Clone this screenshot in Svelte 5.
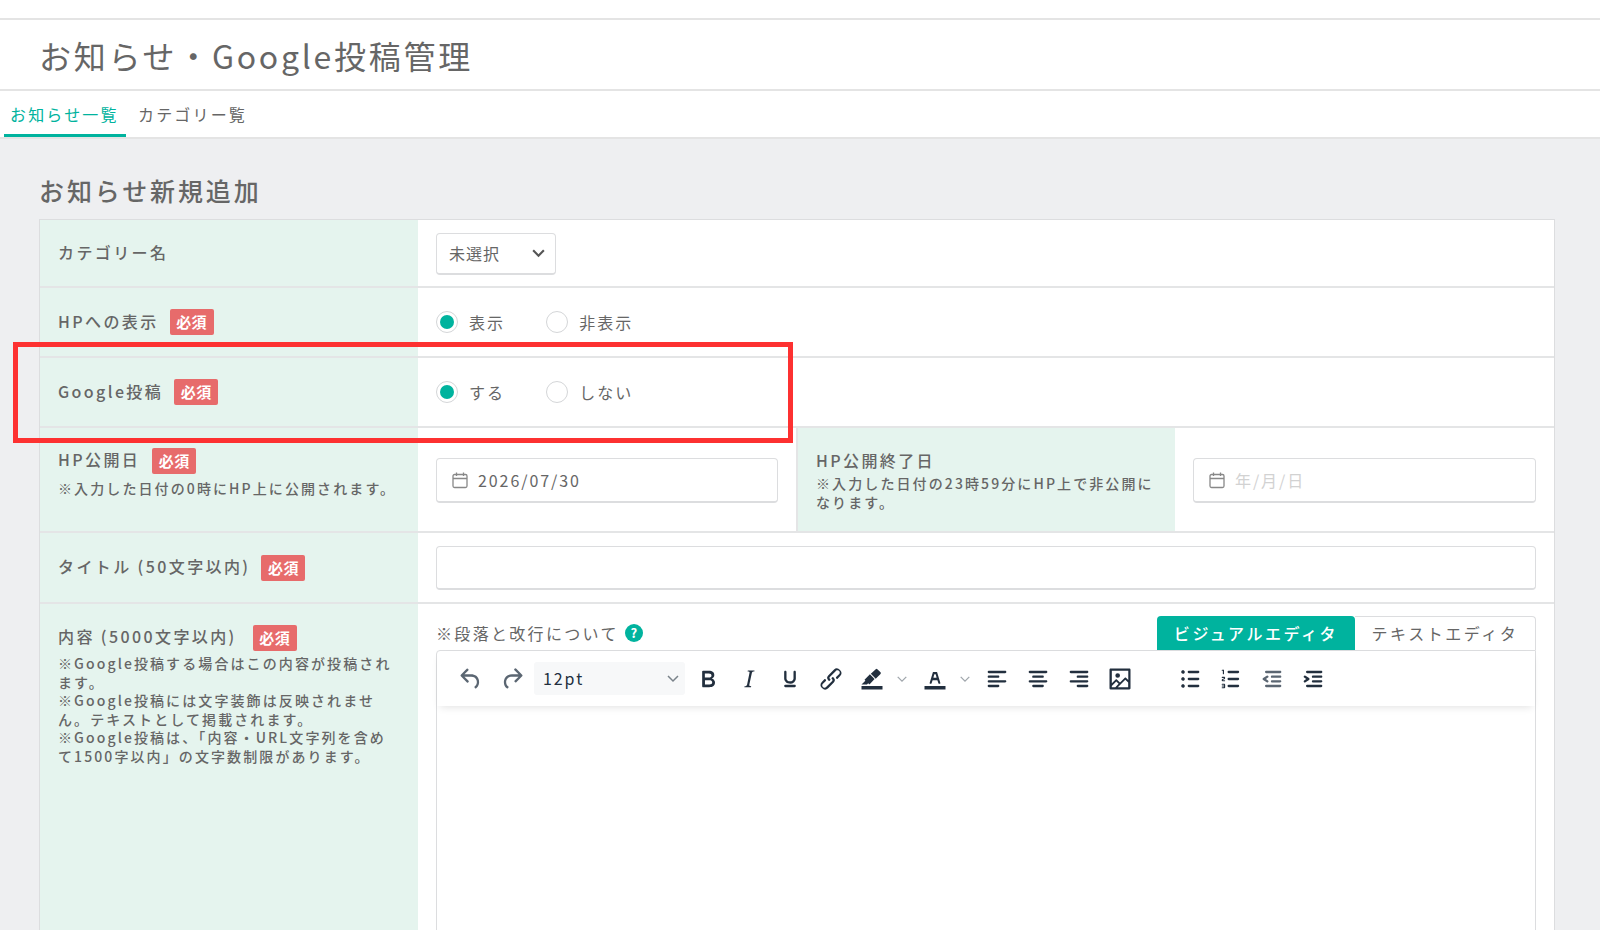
<script>
	const noteLines = [
		'※Google投稿する場合はこの内容が投稿されます。',
		'※Google投稿には文字装飾は反映されません。テキストとして掲載されます。',
		'※Google投稿は、「内容・URL文字列を含めて1500字以内」の文字数制限があります。'
	];

	const icons = {
		undo: 'M6.4 8H12c3.7 0 6.2 2 6.8 5.1.6 2.7-.4 5.6-2.3 6.8a1 1 0 0 1-1-1.8c1.1-.6 1.8-2.7 1.4-4.6-.5-2.1-2.1-3.5-4.9-3.5H6.4l3.3 3.3a1 1 0 1 1-1.4 1.4l-5-5a1 1 0 0 1 0-1.4l5-5a1 1 0 0 1 1.4 1.4L6.4 8z',
		redo: 'M17.6 10H12c-2.8 0-4.4 1.4-4.9 3.5-.4 2 .3 4 1.4 4.6a1 1 0 1 1-1 1.8c-2-1.2-2.9-4.1-2.3-6.8.6-3 3-5.1 6.8-5.1h5.6l-3.3-3.3a1 1 0 1 1 1.4-1.4l5 5a1 1 0 0 1 0 1.4l-5 5a1 1 0 0 1-1.4-1.4l3.3-3.3z',
		bold: 'M7.8 19c-.3 0-.5 0-.6-.2l-.2-.5V5.7c0-.2 0-.4.2-.5l.6-.2h5c1.5 0 2.7.3 3.5 1 .7.6 1.1 1.4 1.1 2.5a3 3 0 0 1-.6 1.9c-.4.6-1 1-1.6 1.2.4.1.9.3 1.3.6s.8.7 1 1.2c.4.4.5 1 .5 1.6 0 1.3-.4 2.3-1.3 3-.8.7-2.1 1-3.8 1H7.8zm5-8.3c.6 0 1.2-.1 1.6-.5.4-.3.6-.7.6-1.3 0-1.1-.8-1.7-2.3-1.7H9.3v3.5h3.4zm.5 6c.7 0 1.3-.1 1.7-.4.4-.4.6-.9.6-1.5s-.2-1-.7-1.4c-.4-.3-1-.4-2-.4H9.4v3.8h4z',
		italic: 'M16.7 4.7l-.1.9h-.3c-.6 0-1 0-1.4.3-.3.3-.4.6-.5 1.1l-2.1 9.8v.6c0 .5.4.8 1.4.8h.2l-.2.8H8l.2-.8h.2c1.1 0 1.8-.5 2-1.5l2-9.8.1-.5c0-.6-.4-.8-1.4-.8h-.3l.2-.9h5.8z',
		underline: 'M16 5c.6 0 1 .4 1 1v5.5a4 4 0 0 1-.4 1.8l-1 1.4a5.3 5.3 0 0 1-5.5 1 5 5 0 0 1-1.6-1c-.5-.4-.8-.9-1.1-1.4a4 4 0 0 1-.4-1.8V6c0-.6.4-1 1-1s1 .4 1 1v5.5c0 .3 0 .6.2 1l.6.7a3.3 3.3 0 0 0 2.2.8 3.4 3.4 0 0 0 2.2-.8c.3-.2.4-.5.6-.8l.2-.9V6c0-.6.4-1 1-1zM8 17h8c.6 0 1 .4 1 1s-.4 1-1 1H8a1 1 0 0 1 0-2z',
		link: 'M6.2 12.3a1 1 0 0 1 1.4 1.4l-2 2a2 2 0 1 0 2.6 2.8l4.8-4.8a1 1 0 0 0 0-1.4 1 1 0 1 1 1.4-1.3 2.9 2.9 0 0 1 0 4L9.6 20a3.9 3.9 0 0 1-5.5-5.5l2-2zm11.6-.6a1 1 0 0 1-1.4-1.4l2-2a2 2 0 1 0-2.6-2.8L11 10.3a1 1 0 0 0 0 1.4A1 1 0 1 1 9.6 13a2.9 2.9 0 0 1 0-4L14.4 4a3.9 3.9 0 0 1 5.5 5.5l-2 2z',
		highlight: 'M3 18h18v3H3zM7.7 16.7H3l3.3-3.3-.7-.8L10.2 8l4 4.1-4 4.2c-.2.2-.6.2-.8 0l-.7-.7zm7.5-13.1a1 1 0 0 1 1.4 0l2.7 2.7a1 1 0 0 1 0 1.4l-4.1 4.1-4.2-4.2 4.2-4z',
		textcolor: 'M3 18h18v3H3zM8.7 16h-.8a.5.5 0 0 1-.5-.6l2.7-9c.1-.3.3-.4.5-.4h2.8c.2 0 .4.1.5.4l2.7 9a.5.5 0 0 1-.5.6h-.8a.5.5 0 0 1-.4-.4l-.7-2.2c0-.3-.3-.4-.5-.4h-3.4c-.2 0-.4.1-.5.4l-.7 2.2c0 .3-.2.4-.4.4zm2.6-7.6l-.6 2a.5.5 0 0 0 .5.6h1.6a.5.5 0 0 0 .5-.6l-.6-2c0-.3-.3-.4-.5-.4h-.4c-.2 0-.4.1-.5.4z',
		left: 'M5 5h14c.6 0 1 .4 1 1s-.4 1-1 1H5a1 1 0 1 1 0-2zm0 4h8c.6 0 1 .4 1 1s-.4 1-1 1H5a1 1 0 1 1 0-2zm0 8h8c.6 0 1 .4 1 1s-.4 1-1 1H5a1 1 0 0 1 0-2zm0-4h14c.6 0 1 .4 1 1s-.4 1-1 1H5a1 1 0 0 1 0-2z',
		center: 'M5 5h14c.6 0 1 .4 1 1s-.4 1-1 1H5a1 1 0 1 1 0-2zm3 4h8c.6 0 1 .4 1 1s-.4 1-1 1H8a1 1 0 1 1 0-2zm0 8h8c.6 0 1 .4 1 1s-.4 1-1 1H8a1 1 0 0 1 0-2zm-3-4h14c.6 0 1 .4 1 1s-.4 1-1 1H5a1 1 0 0 1 0-2z',
		right: 'M5 5h14c.6 0 1 .4 1 1s-.4 1-1 1H5a1 1 0 1 1 0-2zm6 4h8c.6 0 1 .4 1 1s-.4 1-1 1h-8a1 1 0 0 1 0-2zm0 8h8c.6 0 1 .4 1 1s-.4 1-1 1h-8a1 1 0 0 1 0-2zm-6-4h14c.6 0 1 .4 1 1s-.4 1-1 1H5a1 1 0 0 1 0-2z',
		image: 'M5 15.7l3.3-3.2c.3-.3.7-.3 1 0L12 15l4.1-4c.3-.4.8-.4 1 0l2 1.9V5H5v10.7zM5 18V19h3l2.8-2.9-2-2L5 17.9zm14-3l-2.5-2.4-6.4 6.5H19v-4zM4 3h16c.6 0 1 .4 1 1v16c0 .6-.4 1-1 1H4a1 1 0 0 1-1-1V4c0-.6.4-1 1-1zm6 8a2 2 0 1 0 0-4 2 2 0 0 0 0 4z',
		bullist: 'M11 5h8c.6 0 1 .4 1 1s-.4 1-1 1h-8a1 1 0 0 1 0-2zm0 6h8c.6 0 1 .4 1 1s-.4 1-1 1h-8a1 1 0 0 1 0-2zm0 6h8c.6 0 1 .4 1 1s-.4 1-1 1h-8a1 1 0 0 1 0-2zM4.5 6c0-.4.1-.8.4-1 .3-.4.7-.5 1.1-.5.4 0 .8.1 1 .4.4.3.5.7.5 1.1 0 .4-.1.8-.4 1-.3.4-.7.5-1.1.5-.4 0-.8-.1-1-.4-.4-.3-.5-.7-.5-1.1zm0 6c0-.4.1-.8.4-1 .3-.4.7-.5 1.1-.5.4 0 .8.1 1 .4.4.3.5.7.5 1.1 0 .4-.1.8-.4 1-.3.4-.7.5-1.1.5-.4 0-.8-.1-1-.4-.4-.3-.5-.7-.5-1.1zm0 6c0-.4.1-.8.4-1 .3-.4.7-.5 1.1-.5.4 0 .8.1 1 .4.4.3.5.7.5 1.1 0 .4-.1.8-.4 1-.3.4-.7.5-1.1.5-.4 0-.8-.1-1-.4-.4-.3-.5-.7-.5-1.1z',
		numlist: 'M10 17h8c.6 0 1 .4 1 1s-.4 1-1 1h-8a1 1 0 0 1 0-2zm0-6h8c.6 0 1 .4 1 1s-.4 1-1 1h-8a1 1 0 0 1 0-2zm0-6h8c.6 0 1 .4 1 1s-.4 1-1 1h-8a1 1 0 1 1 0-2zM6 4v3.5c0 .3-.2.5-.5.5a.5.5 0 0 1-.5-.5V5h-.5a.5.5 0 0 1 0-1H6zm-1 8.8l.2.2h1.3c.3 0 .5.2.5.5s-.2.5-.5.5H4.9a1 1 0 0 1-.9-1V13c0-.4.3-.8.6-1l1.2-.4.2-.3a.2.2 0 0 0-.2-.2H4.5a.5.5 0 0 1-.5-.5c0-.3.2-.5.5-.5h1.6c.5 0 .9.4.9 1v.1c0 .4-.3.8-.6 1l-1.2.4-.2.3zM7 17v2c0 .6-.4 1-1 1H4.5a.5.5 0 0 1 0-1h1.2c.2 0 .3-.1.3-.3 0-.2-.1-.3-.3-.3H4.4a.4.4 0 1 1 0-.8h1.3c.2 0 .3-.1.3-.3 0-.2-.1-.3-.3-.3H4.5a.5.5 0 1 1 0-1H6c.6 0 1 .4 1 1z',
		outdent: 'M7 5h12c.6 0 1 .4 1 1s-.4 1-1 1H7a1 1 0 1 1 0-2zm5 4h7c.6 0 1 .4 1 1s-.4 1-1 1h-7a1 1 0 0 1 0-2zm0 4h7c.6 0 1 .4 1 1s-.4 1-1 1h-7a1 1 0 0 1 0-2zm-5 4h12a1 1 0 0 1 0 2H7a1 1 0 0 1 0-2zm1.6-3.8a1 1 0 0 1-1.2 1.6l-3-2a1 1 0 0 1 0-1.6l3-2a1 1 0 0 1 1.2 1.6L6.8 12l1.8 1.2z',
		indent: 'M7 5h12c.6 0 1 .4 1 1s-.4 1-1 1H7a1 1 0 1 1 0-2zm5 4h7c.6 0 1 .4 1 1s-.4 1-1 1h-7a1 1 0 0 1 0-2zm0 4h7c.6 0 1 .4 1 1s-.4 1-1 1h-7a1 1 0 0 1 0-2zm-5 4h12a1 1 0 0 1 0 2H7a1 1 0 0 1 0-2zm-2.6-3.8L6.2 12l-1.8-1.2a1 1 0 0 1 1.2-1.6l3 2a1 1 0 0 1 0 1.6l-3 2a1 1 0 1 1-1.2-1.6z'
	};

	const chevron = 'M2 2l5 5 5-5';
</script>

{#snippet icon(name, dim = false)}
	<span class="tool" class:dim>
		<svg viewBox="0 0 24 24" width="28" height="28"><path d={icons[name]} fill-rule="evenodd" /></svg>
	</span>
{/snippet}

{#snippet caret()}
	<span class="caret">
		<svg viewBox="0 0 14 9" width="12" height="8"><path d={chevron} /></svg>
	</span>
{/snippet}

{#snippet calendar()}
	<svg class="cal" viewBox="0 0 18 18" width="18" height="18">
		<rect x="2" y="3.5" width="14" height="13" rx="1.5" />
		<path d="M2 7.5h14M5.5 1.5v3.5M12.5 1.5v3.5" />
	</svg>
{/snippet}

{#snippet radio(label, on)}
	<span class="radio-item">
		<span class="radio" class:on></span>
		<span>{label}</span>
	</span>
{/snippet}

<div class="page">
	<header class="head">
		<h1>お知らせ・Google投稿管理</h1>
	</header>
	<nav class="tabs">
		<span class="tab active">お知らせ一覧</span>
		<span class="tab">カテゴリー覧</span>
	</nav>

	<main class="body">
		<h2>お知らせ新規追加</h2>
		<div class="table">
			<div class="row r1">
				<div class="label"><span>カテゴリー名</span></div>
				<div class="value">
					<div class="select">
						<span>未選択</span>
						<svg viewBox="0 0 14 9" width="15" height="10"><path d={chevron} /></svg>
					</div>
				</div>
			</div>

			<div class="row r2">
				<div class="label"><span>HPへの表示</span><b class="req">必須</b></div>
				<div class="value radios">
					{@render radio('表示', true)}
					{@render radio('非表示', false)}
				</div>
			</div>

			<div class="row r2">
				<div class="label"><span>Google投稿</span><b class="req">必須</b></div>
				<div class="value radios">
					{@render radio('する', true)}
					{@render radio('しない', false)}
				</div>
			</div>

			<div class="row dates">
				<div class="label stack">
					<div class="title-line"><span>HP公開日</span><b class="req">必須</b></div>
					<p class="note">※入力した日付の0時にHP上に公開されます。</p>
				</div>
				<div class="value">
					<div class="input date">{@render calendar()}<span>2026/07/30</span></div>
				</div>
				<div class="label stack second">
					<div class="title-line"><span>HP公開終了日</span></div>
					<p class="note">※入力した日付の23時59分にHP上で非公開になります。</p>
				</div>
				<div class="value">
					<div class="input date">{@render calendar()}<span class="placeholder">年/月/日</span></div>
				</div>
			</div>

			<div class="row r-title">
				<div class="label"><span>タイトル (50文字以内)</span><b class="req">必須</b></div>
				<div class="value"><div class="input wide"></div></div>
			</div>

			<div class="row r-content">
				<div class="label stack">
					<div class="title-line"><span>内容 (5000文字以内)</span><b class="req">必須</b></div>
					{#each noteLines as line}
						<p class="note">{line}</p>
					{/each}
				</div>
				<div class="value editor-cell">
					<div class="editor-head">
						<span class="hint">※段落と改行について<i class="help">?</i></span>
						<div class="modes">
							<span class="mode on">ビジュアルエディタ</span>
							<span class="mode">テキストエディタ</span>
						</div>
					</div>
					<div class="editor">
						<div class="toolbar">
							{@render icon('undo', true)}
							{@render icon('redo', true)}
							<div class="size">
								<span>12pt</span>
								<svg viewBox="0 0 14 9" width="14" height="9"><path d={chevron} /></svg>
							</div>
							{@render icon('bold')}
							{@render icon('italic')}
							{@render icon('underline')}
							{@render icon('link')}
							{@render icon('highlight')}
							{@render caret()}
							{@render icon('textcolor')}
							{@render caret()}
							{@render icon('left')}
							{@render icon('center')}
							{@render icon('right')}
							{@render icon('image')}
							<span class="sep"></span>
							{@render icon('bullist')}
							{@render icon('numlist')}
							{@render icon('outdent', true)}
							{@render icon('indent')}
						</div>
						<div class="edit-area"></div>
					</div>
				</div>
			</div>
		</div>
	</main>

	<div class="callout"></div>
</div>

<style>
	:global(body) {
		margin: 0;
		background: #fff;
		overflow: hidden;
	}

	.page {
		position: relative;
		height: 930px;
		overflow: hidden;
		font-family: 'Noto Sans CJK JP', 'Noto Sans', sans-serif;
		color: #666;
		letter-spacing: 0.12em;
	}

	.head {
		margin-top: 18px;
		height: 67px;
		border-top: 2px solid #e4e4e4;
		border-bottom: 2px solid #e4e4e4;
		padding: 2px 0 0 39px;
		display: flex;
		align-items: center;
		background: #fff;
	}

	h1 {
		margin: 0;
		font-size: 32px;
		font-weight: 400;
		line-height: 1.2;
		letter-spacing: 0.085em;
		white-space: nowrap;
	}

	.tabs {
		height: 46px;
		padding-left: 4px;
		display: flex;
		border-bottom: 2px solid #e4e4e4;
	}

	.tab {
		padding: 0 6px;
		width: 110px;
		margin-right: 6px;
		line-height: 47px;
		font-size: 16px;
		letter-spacing: 0.135em;
		white-space: nowrap;
	}

	.tab.active {
		color: #00b39e;
		border-bottom: 3px solid #00b39e;
		width: 122px;
		height: 46px;
		box-sizing: border-box;
	}

	.body {
		background: #eeeff1;
		padding: 33px 45px 0 39px;
		height: 800px;
	}

	h2 {
		margin: 0 0 10px;
		font-size: 25px;
		font-weight: 500;
		line-height: 37px;
		letter-spacing: 0.115em;
	}

	.table {
		border: 1px solid #dcdddf;
		background: #fff;
	}

	.row {
		display: grid;
		grid-template-columns: 378px 1fr;
		border-bottom: 2px solid #e4e5e6;
	}

	.r1 { height: 66px; }
	.r2 { height: 68px; }
	.r-title { height: 69px; }
	.dates {
		height: 103px;
		grid-template-columns: 378px 378px 379px 1fr;
	}
	.r-content { height: 500px; border-bottom: 0; }

	.label {
		background: #e5f4ee;
		padding: 0 18px;
		display: flex;
		align-items: center;
		font-size: 16px;
		font-weight: 500;
		letter-spacing: 0.15em;
		white-space: nowrap;
	}

	.label > span,
	.title-line > span {
		margin-bottom: 3px;
	}

	.label.stack {
		display: block;
		padding-top: 19px;
		white-space: normal;
	}

	.label.second {
		border-left: 2px solid #e4e5e6;
		padding-top: 22px;
	}

	.title-line {
		display: flex;
		align-items: center;
		height: 27px;
		white-space: nowrap;
	}

	.req {
		margin-left: 11px;
		width: 44px;
		height: 26px;
		border-radius: 2px;
		background: #e76b6b;
		color: #fff;
		font-size: 15px;
		font-weight: 700;
		line-height: 26px;
		text-align: center;
		letter-spacing: 0.03em;
		flex: none;
	}

	.stack .req { margin-left: 12px; }
	.r-content .label.stack { padding-top: 20px; }
	.r-content .req { margin-left: 16px; }

	.note {
		margin: 0;
		font-size: 14px;
		line-height: 18.6px;
		font-weight: 500;
		letter-spacing: 0.15em;
	}

	.stack .title-line + .note { margin-top: 5px; }
	.second .title-line { height: 22px; }
	.second .title-line + .note { margin-top: 2px; }
	.r-content .title-line + .note { margin-top: 3px; }

	.value {
		padding: 0 18px;
		display: flex;
		align-items: center;
		font-size: 16px;
		min-width: 0;
	}

	.select {
		width: 120px;
		height: 42px;
		margin-top: 1px;
		box-sizing: border-box;
		border: 1px solid #dcdddf;
		border-bottom-width: 2px;
		border-radius: 4px;
		padding: 0 9px 0 12px;
		display: flex;
		align-items: center;
		justify-content: space-between;
	}

	.select span { letter-spacing: 0.06em; }

	.select svg path,
	.size svg path,
	.caret svg path {
		fill: none;
		stroke: #555;
		stroke-width: 2;
	}

	.radios { gap: 41px; }

	.radio-item {
		display: flex;
		align-items: center;
		gap: 11px;
		letter-spacing: 0.13em;
	}

	.radio {
		width: 22px;
		height: 22px;
		box-sizing: border-box;
		border: 1px solid #d4d6d8;
		border-radius: 50%;
		background: #fff;
		display: flex;
		align-items: center;
		justify-content: center;
	}

	.radio.on::after {
		content: '';
		width: 14px;
		height: 14px;
		border-radius: 50%;
		background: #00b39e;
	}

	.input {
		box-sizing: border-box;
		height: 45px;
		width: 100%;
		border: 1px solid #dcdddf;
		border-bottom-width: 2px;
		border-radius: 4px;
		background: #fff;
	}

	.input.wide { height: 44px; }

	.date {
		display: flex;
		align-items: center;
		padding-left: 14px;
		gap: 9px;
		margin-top: 1px;
	}

	.cal rect,
	.cal path {
		fill: none;
		stroke: #888;
		stroke-width: 1.3;
	}

	.placeholder { color: #d2d2d2; }

	.editor-cell {
		display: block;
		padding-top: 12px;
	}

	.editor-head {
		display: flex;
		justify-content: space-between;
		align-items: flex-end;
		height: 34px;
	}

	.hint {
		display: flex;
		align-items: center;
		align-self: center;
		letter-spacing: 0.145em;
	}

	.help {
		margin-left: 6px;
		width: 18px;
		height: 18px;
		border-radius: 50%;
		background: #00b39e;
		color: #fff;
		font-size: 13px;
		font-style: normal;
		font-weight: 700;
		line-height: 18px;
		text-align: center;
		letter-spacing: 0;
	}

	.modes { display: flex; }

	.mode {
		box-sizing: border-box;
		width: 181px;
		height: 34px;
		line-height: 32px;
		text-align: center;
		white-space: nowrap;
		letter-spacing: 0.16em;
		border: 1px solid #dcdddf;
		border-bottom: 0;
		border-left: 0;
		border-radius: 0 4px 0 0;
	}

	.mode.on {
		width: 198px;
		background: #00b39e;
		border: 0;
		border-radius: 4px 4px 0 0;
		color: #fff;
		font-weight: 500;
		line-height: 34px;
	}

	.editor {
		border: 1px solid #dcdddf;
		border-radius: 4px 0 0 0;
		height: 400px;
		background: #fff;
	}

	.toolbar {
		height: 55px;
		padding-left: 17px;
		display: flex;
		align-items: center;
		box-shadow: 0 4px 8px -3px rgba(0, 0, 0, 0.12);
	}

	.tool {
		flex: none;
		width: 34px;
		height: 34px;
		margin-right: 7px;
		display: flex;
		align-items: center;
		justify-content: center;
	}

	.tool svg path { fill: #222f3e; }
	.tool.dim svg path { fill: #5b6672; }

	.caret {
		flex: none;
		width: 14px;
		margin: 0 8.5px 0 -1px;
		display: flex;
		justify-content: center;
	}

	.caret svg path { stroke: #a0a6ac; stroke-width: 1.5; }

	.sep { width: 29px; flex: none; }

	.size {
		flex: none;
		width: 151px;
		height: 33px;
		margin: 0 6px 0 -2px;
		padding: 0 5px 0 9px;
		box-sizing: border-box;
		background: #f7f8f9;
		border-radius: 3px;
		display: flex;
		align-items: center;
		justify-content: space-between;
		font-size: 16px;
		line-height: 30px;
		color: #222f3e;
	}

	.size span { margin-top: -2px; }

	.size svg path { stroke: #7a828a; stroke-width: 1.5; }

	.callout {
		position: absolute;
		left: 13px;
		top: 342px;
		width: 780px;
		height: 101px;
		box-sizing: border-box;
		border: 5px solid #fd3131;
		pointer-events: none;
	}
</style>
